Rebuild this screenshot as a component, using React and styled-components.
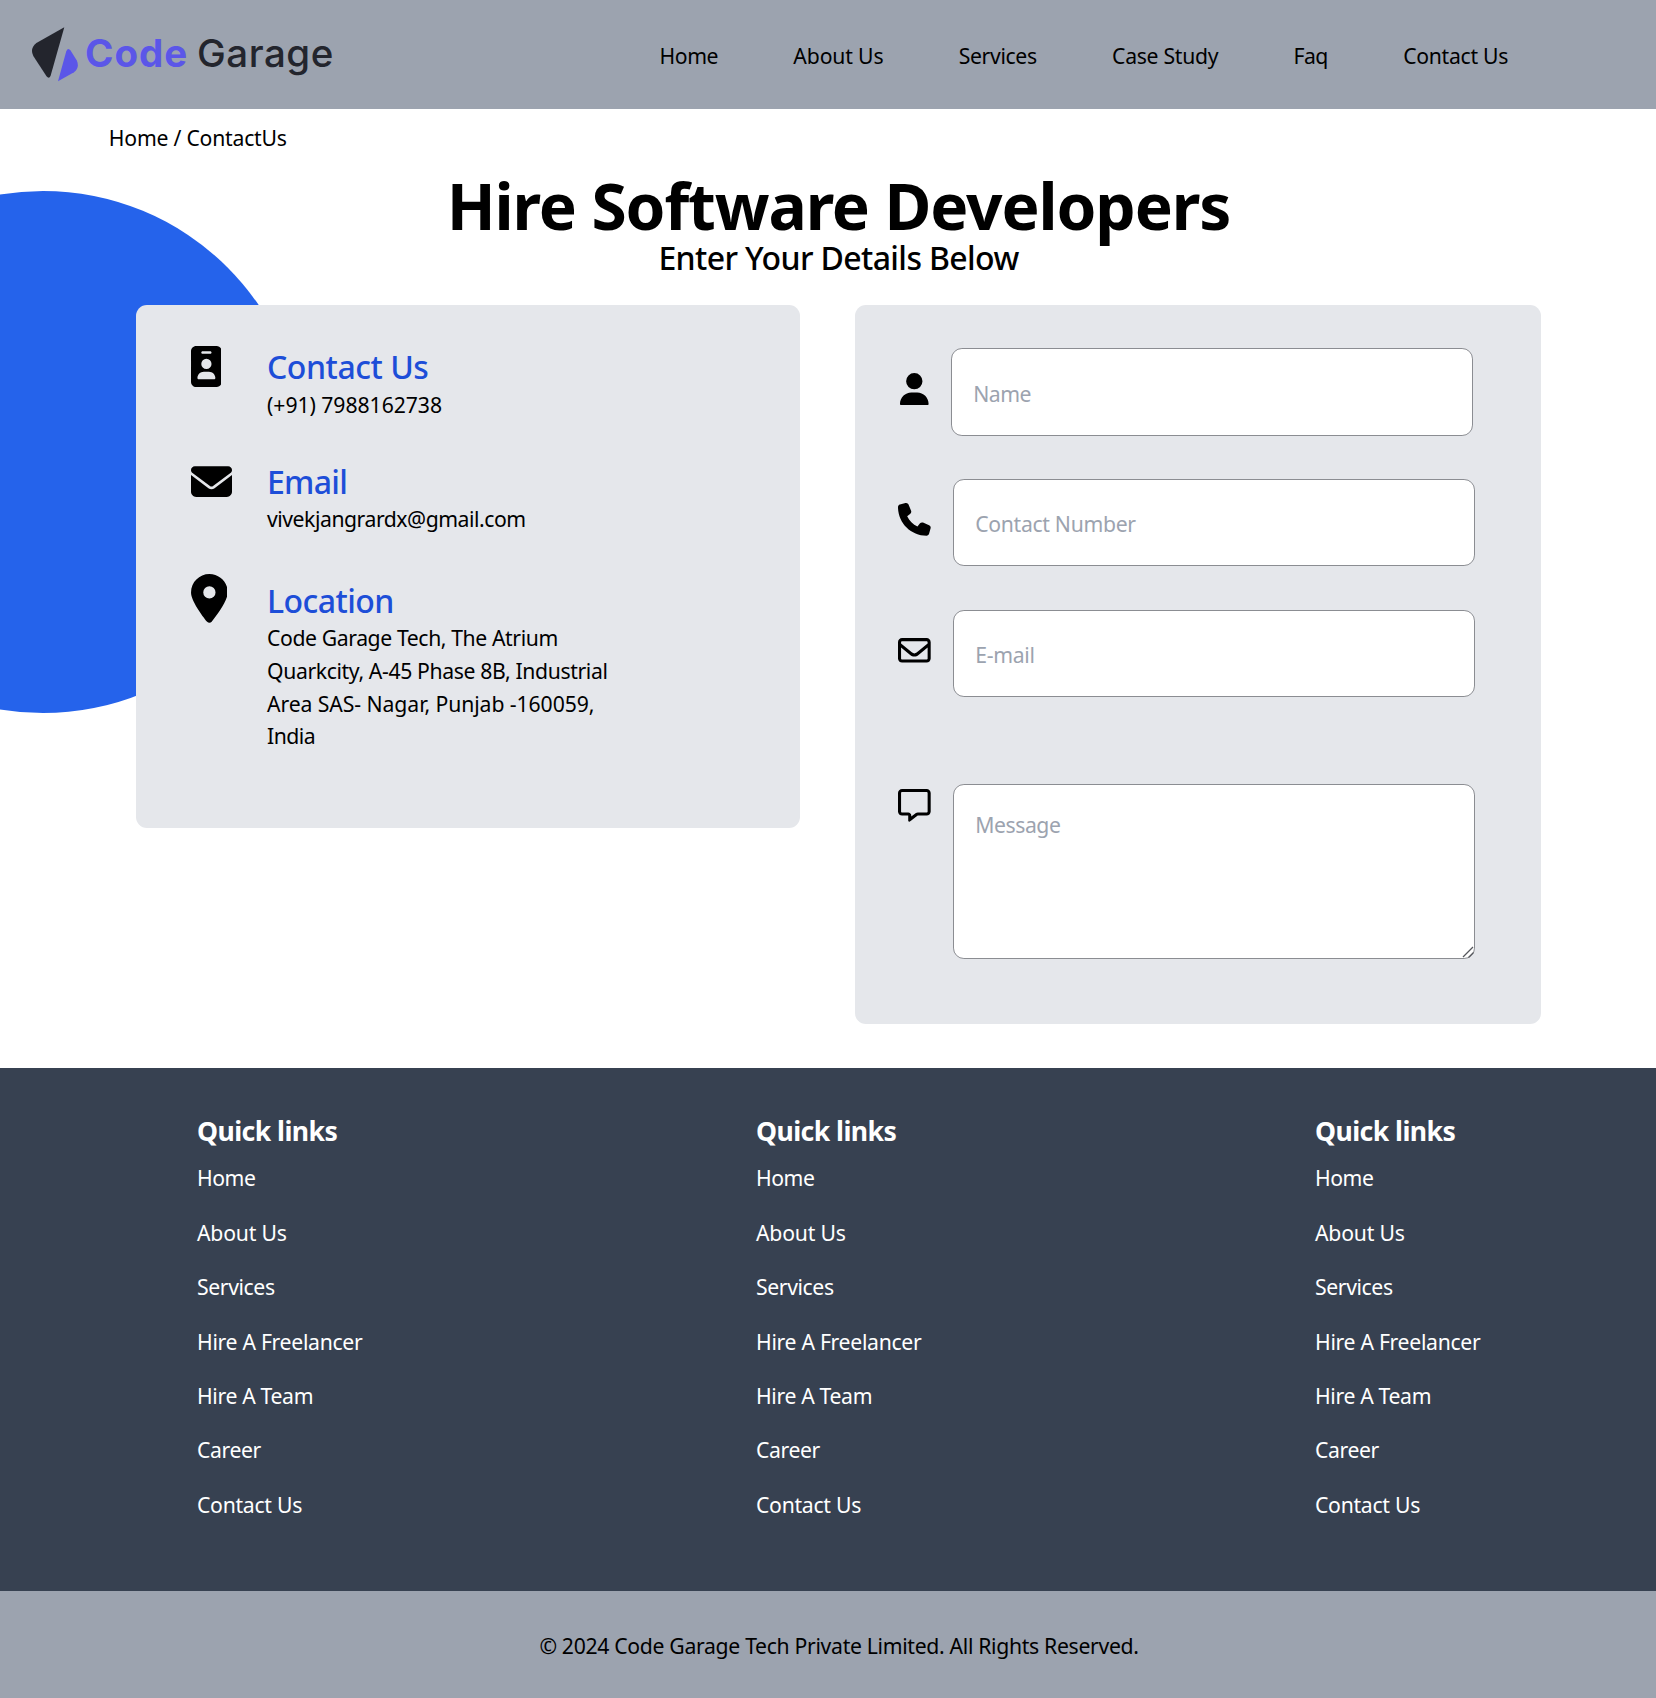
import React from "react";
import styled, { createGlobalStyle } from "styled-components";
import {
  FaEnvelope,
  FaIdBadge,
  FaLocationDot,
  FaPhone,
  FaRegEnvelope,
  FaRegMessage,
  FaUser,
} from "react-icons/fa6";

const GlobalStyle = createGlobalStyle`
  *, *::before, *::after { box-sizing: border-box; }
  body {
    margin: 0;
    background: #fff;
    color: #000;
    font-family: "Noto Sans", "Open Sans", sans-serif;
    font-size: 21.2px;
    line-height: 32.67px;
    overflow-x: hidden;
  }
  h1, h2, h3, p, ul { margin: 0; padding: 0; }
  ul { list-style: none; }
  a { color: inherit; text-decoration: none; }
  svg { display: block; flex: none; }
`;

const Page = styled.div`
  min-height: 1698px;
  overflow: hidden;
`;

const Header = styled.header`
  display: flex;
  align-items: flex-start;
  justify-content: space-between;
  height: 109px;
  padding: 0 148px 0 31px;
  background: #9ca3af;
`;

const Logo = styled.a`
  display: flex;
  padding-top: 26px;
`;

const LogoText = styled.span`
  margin: 4px 0 0 6px;
  font-family: Inter, sans-serif;
  font-size: 38.5px;
  line-height: 46px;
  font-weight: 500;
  letter-spacing: 0.5px;
  color: #23252d;
  white-space: nowrap;
`;

const LogoAccent = styled.span`
  margin-right: -2px;
  font-weight: 700;
  letter-spacing: 1px;
  color: #5b56e8;
`;

const Nav = styled.nav`
  display: flex;
  gap: 75.3px;
  padding-top: 40.4px;
`;

const Tracked = styled.span`
  letter-spacing: ${(p) => p.$track || 0}px;
  white-space: nowrap;
`;

const NavLink = styled(Tracked).attrs({ as: "a", href: "#" })``;

const Main = styled.main`
  position: relative;
  height: 958.5px;
  padding-top: 12.7px;
`;

const Blob = styled.div`
  position: absolute;
  z-index: 0;
  left: -218.5px;
  top: 81.5px;
  width: 522.7px;
  height: 522.7px;
  border-radius: 50%;
  background: #2563eb;
`;

const Breadcrumb = styled.p`
  padding-left: 108.8px;
  letter-spacing: -0.22px;
`;

const Intro = styled.section`
  position: relative;
  height: 132.9px;
  padding: 19.3px 0 0 21px;
  text-align: center;
`;

const Title = styled.h1`
  font-size: 64px;
  line-height: 64px;
  font-weight: 700;
  letter-spacing: -1.12px;
`;

const Subtitle = styled.h2`
  font-size: 32px;
  line-height: 40.6px;
  font-weight: 500;
  letter-spacing: -0.62px;
`;

const Panels = styled.section`
  position: relative;
  display: grid;
  grid-template-columns: 664px 685.5px;
  column-gap: 55.2px;
  align-items: start;
  margin-top: 17.8px;
  padding-left: 136px;
`;

const Card = styled.div`
  border-radius: 10.9px;
  background: #e5e7eb;
`;

const InfoCard = styled(Card)`
  height: 522.7px;
  padding: 40.1px 54.5px;
`;

const InfoItem = styled.div`
  display: grid;
  grid-template-columns: 76.5px 1fr;
  margin-bottom: ${(p) => p.$after}px;
`;

const InfoIcon = styled.span`
  margin-top: ${(p) => p.$shift}px;
  svg {
    width: ${(p) => p.$width}px;
    height: ${(p) => p.$height}px;
  }
`;

const InfoTitle = styled.h3`
  font-size: 32px;
  line-height: 43.6px;
  font-weight: 500;
  letter-spacing: ${(p) => p.$track}px;
  color: #1d4ed8;
`;

const InfoLine = styled(Tracked).attrs({ as: "p" })``;

const FormCard = styled(Card).attrs({ as: "form" })`
  height: 718.7px;
  padding: 43.4px 0 0 43px;
`;

const Field = styled.label`
  display: flex;
  gap: 22px;
  margin-bottom: ${(p) => (p.$last ? 0 : 43.6)}px;
  margin-top: ${(p) => (p.$last ? 87 : 0)}px;
`;

const FieldIcon = styled.span`
  align-self: ${(p) => (p.$top ? "flex-start" : "center")};
  padding: ${(p) => (p.$top ? "5px 0 0" : "0 0 6px")};
  margin-left: ${(p) => p.$indent || 0}px;
  svg {
    width: ${(p) => p.$width || 32.7}px;
    height: 32.7px;
  }
`;

const Input = styled.input`
  display: block;
  width: 522.2px;
  height: 87.2px;
  padding: 2px 21.4px 0;
  border: 1px solid #8b8d92;
  border-radius: 10.9px;
  background: #fff;
  font: inherit;
  letter-spacing: ${(p) => p.$track}px;
  outline: none;
  &::placeholder {
    color: #9ca3af;
    opacity: 1;
  }
`;

const TextArea = styled(Input).attrs({ as: "textarea" })`
  height: 174.5px;
  padding-top: 23.5px;
  resize: none;
`;

const TextAreaBox = styled.div`
  position: relative;
`;

const Grip = styled.svg`
  position: absolute;
  right: 1px;
  bottom: 1px;
`;

const Footer = styled.footer`
  display: grid;
  grid-template-columns: repeat(3, 559px);
  height: 523px;
  padding: 44.5px 0 0 197px;
  background: #374151;
  color: #fff;
`;

const FooterTitle = styled.h3`
  margin-bottom: 12px;
  font-size: 26.6px;
  line-height: 38.1px;
  font-weight: 700;
  letter-spacing: -0.55px;
`;

const FooterList = styled.ul`
  display: grid;
  row-gap: 21.8px;
`;

const Copyright = styled.div`
  height: 107.5px;
  padding: 39.9px 0 0 22px;
  background: #9ca3af;
  text-align: center;
  letter-spacing: -0.32px;
`;

const NAV = [
  ["Home", -0.45],
  ["About Us", -0.15],
  ["Services", -0.35],
  ["Case Study", -0.3],
  ["Faq", -0.5],
  ["Contact Us", -0.3],
];

const INFO = [
  {
    Icon: FaIdBadge, width: 30.8, height: 41, shift: 1.3, after: 38.1,
    title: "Contact Us", titleTrack: -0.45,
    lines: [["(+91) 7988162738", -0.05]],
  },
  {
    Icon: FaEnvelope, width: 41, height: 41, shift: 1.3, after: 43,
    title: "Email", titleTrack: -0.7,
    lines: [["vivekjangrardx@gmail.com", -0.46]],
  },
  {
    Icon: FaLocationDot, width: 36.8, height: 49, shift: -4.5, after: 0,
    title: "Location", titleTrack: -0.55,
    lines: [
      ["Code Garage Tech, The Atrium", -0.4],
      ["Quarkcity, A-45 Phase 8B, Industrial", -0.38],
      ["Area SAS- Nagar, Punjab -160059,", -0.08],
      ["India", -0.5],
    ],
  },
];

const FIELDS = [
  { Icon: FaUser, label: "Name", track: -0.55, indent: 2.1, width: 28.6 },
  { Icon: FaPhone, label: "Contact Number", track: -0.32 },
  { Icon: FaRegEnvelope, label: "E-mail", track: -0.3 },
];

const QUICK_LINKS = [
  ["Home", -0.45],
  ["About Us", -0.2],
  ["Services", -0.4],
  ["Hire A Freelancer", -0.3],
  ["Hire A Team", -0.35],
  ["Career", -0.4],
  ["Contact Us", -0.28],
];

function LogoMark() {
  return (
    <svg width="48" height="56" viewBox="0 0 48 56" aria-hidden="true">
      <path
        d="M33.3 1.2 L19.6 49.8 Q18 53.4 15.5 50.3 L2.3 30 Q-1.4 22.4 5.4 17 Z"
        fill="#23252d"
      />
      <path
        d="M27 55.2 L35.2 25.4 Q37 21.2 39.6 24.6 L45.8 34.6 Q48.8 41.8 43 46.2 Z"
        fill="#5b56e8"
      />
    </svg>
  );
}

export default function App() {
  return (
    <Page>
      <GlobalStyle />
      <Header>
        <Logo href="#">
          <LogoMark />
          <LogoText>
            <LogoAccent>Code</LogoAccent> Garage
          </LogoText>
        </Logo>
        <Nav>
          {NAV.map(([label, track]) => (
            <NavLink key={label} $track={track}>{label}</NavLink>
          ))}
        </Nav>
      </Header>

      <Main>
        <Blob />
        <Breadcrumb>Home / ContactUs</Breadcrumb>
        <Intro>
          <Title>Hire Software Developers</Title>
          <Subtitle>Enter Your Details Below</Subtitle>
        </Intro>
        <Panels>
          <InfoCard>
            {INFO.map(({ Icon, width, height, shift, after, title, titleTrack, lines }) => (
              <InfoItem key={title} $after={after}>
                <InfoIcon $width={width} $height={height} $shift={shift}><Icon /></InfoIcon>
                <div>
                  <InfoTitle $track={titleTrack}>{title}</InfoTitle>
                  {lines.map(([text, track]) => (
                    <InfoLine key={text} $track={track}>{text}</InfoLine>
                  ))}
                </div>
              </InfoItem>
            ))}
          </InfoCard>
          <FormCard>
            {FIELDS.map(({ Icon, label, track, indent, width }) => (
              <Field key={label}>
                <FieldIcon $indent={indent} $width={width}><Icon /></FieldIcon>
                <Input placeholder={label} $track={track} />
              </Field>
            ))}
            <Field $last>
              <FieldIcon $top><FaRegMessage /></FieldIcon>
              <TextAreaBox>
                <TextArea placeholder="Message" $track={-0.45} />
                <Grip width="12" height="12" viewBox="0 0 12 12" aria-hidden="true">
                  <path d="M1 11 L11 1 M6.5 11.5 L11.5 6.5" stroke="#55575c" strokeWidth="1.3" />
                </Grip>
              </TextAreaBox>
            </Field>
          </FormCard>
        </Panels>
      </Main>

      <Footer>
        {[0, 1, 2].map((column) => (
          <div key={column}>
            <FooterTitle>Quick links</FooterTitle>
            <FooterList>
              {QUICK_LINKS.map(([label, track]) => (
                <li key={label}>
                  <NavLink $track={track}>{label}</NavLink>
                </li>
              ))}
            </FooterList>
          </div>
        ))}
      </Footer>
      <Copyright>© 2024 Code Garage Tech Private Limited. All Rights Reserved.</Copyright>
    </Page>
  );
}
